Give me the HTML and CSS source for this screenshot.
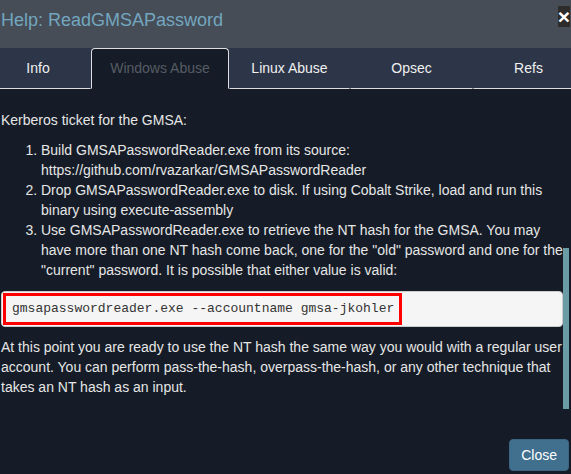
FILE: index.html
```html
<!DOCTYPE html>
<html>
<head>
<meta charset="utf-8">
<link rel="stylesheet" href="styles.css">
</head>
<body>
<div class="modal">
  <div class="modal-header">
    <h4 class="modal-title">Help: ReadGMSAPassword</h4>
    <span class="close">×</span>
  </div>
  <ul class="tabs">
    <li class="tab tab-info"><a>Info</a></li>
    <li class="tab tab-win active"><a>Windows Abuse</a></li>
    <li class="tab tab-linux"><a>Linux Abuse</a></li>
    <li class="tab tab-opsec"><a>Opsec</a></li>
    <li class="tab tab-refs"><a>Refs</a></li>
  </ul>
  <div class="modal-body">
    <div class="content">
      <p>Kerberos ticket for the GMSA:</p>
      <ol>
        <li>Build GMSAPasswordReader.exe from its source: https://github.com/rvazarkar/GMSAPasswordReader</li>
        <li>Drop GMSAPasswordReader.exe to disk. If using Cobalt Strike, load and run this binary using execute-assembly</li>
        <li>Use GMSAPasswordReader.exe to retrieve the NT hash for the GMSA. You may have more than one NT hash come back, one for the "old" password and one for the "current" password. It is possible that either value is valid:</li>
      </ol>
      <pre class="code"><span class="highlight">gmsapasswordreader.exe --accountname gmsa-jkohler</span></pre>
      <p>At this point you are ready to use the NT hash the same way you would with a regular user account. You can perform pass-the-hash, overpass-the-hash, or any other technique that takes an NT hash as an input.</p>
    </div>
    <div class="scroll-thumb"></div>
  </div>
  <div class="modal-footer">
    <button class="btn">Close</button>
  </div>
</div>
</body>
</html>
```

FILE: styles.css
```css
html, body {
  margin: 0;
  padding: 0;
  background: #151c27;
  overflow: hidden;
}
body {
  width: 571px;
  height: 474px;
  font-family: "Liberation Sans", Arial, sans-serif;
  font-size: 14px;
  line-height: 20px;
  color: #e6e6e6;
}
.modal {
  margin-left: -14px;
  width: 598px;
}
.modal-header {
  height: 48px;
  box-sizing: border-box;
  background: #464d57;
  padding: 7px 15px 0 15px;
  display: flex;
  justify-content: space-between;
  align-items: flex-start;
}
.modal-title {
  margin: 0;
  font-size: 18px;
  font-weight: normal;
  line-height: 26px;
  color: #73a6bf;
}
.close {
  margin-top: -1px;
  margin-right: -1px;
  font-size: 21px;
  font-weight: bold;
  line-height: 21px;
  color: #ffffff;
  background: #2e2b2b;
}
.tabs {
  list-style: none;
  margin: 0;
  padding: 0;
  display: flex;
  background: #2c3648;
  width: 599px;
  margin-left: -1px;
}
.tab {
  flex: none;
  text-align: center;
}
.tab a {
  display: block;
  padding: 10px 0;
  line-height: 20px;
  border: 1px solid transparent;
  border-top: none;
  border-bottom-color: #dddddd;
  color: #f0f0f0;
}
.tab-info { width: 106px; }
.tab-win { width: 138px; }
.tab-linux { width: 121px; }
.tab-opsec { width: 123px; }
.tab-refs { width: 111px; }
.tab.active a {
  background: #151c27;
  border: 1px solid #dddddd;
  border-bottom-color: #151c27;
  border-radius: 4px 4px 0 0;
  color: #555b63;
  padding: 9px 0 10px;
}
.modal-body {
  position: relative;
  height: 341px;
  overflow: hidden;
  padding: 0 21px 0 15px;
}
.content {
  padding-top: 21px;
}
.content p {
  margin: 0 0 10px;
}
.content ol {
  margin: 0 0 11px;
  padding-left: 40px;
}
.code {
  margin: 0 0 10px;
  padding: 1px;
  background: #f5f5f5;
  border: 1px solid #cccccc;
  border-radius: 4px;
  color: #333333;
  font-family: "Liberation Mono", "Courier New", monospace;
  font-size: 13px;
  line-height: 18px;
}
.highlight {
  display: inline-block;
  border: 3px solid #ff0000;
  padding: 4px 5px 4px 6px;
}
.scroll-thumb {
  position: absolute;
  right: 15px;
  top: 159px;
  width: 6px;
  height: 161px;
  background: #6a9ca6;
}
.modal-footer {
  padding: 9px 15px 0;
  display: flex;
  justify-content: flex-end;
}
.btn {
  font-family: "Liberation Sans", Arial, sans-serif;
  font-size: 14px;
  line-height: 20px;
  padding: 5px 11px;
  background: #41708f;
  border: 1px solid #3a6583;
  border-radius: 4px;
  color: #ffffff;
}
```
